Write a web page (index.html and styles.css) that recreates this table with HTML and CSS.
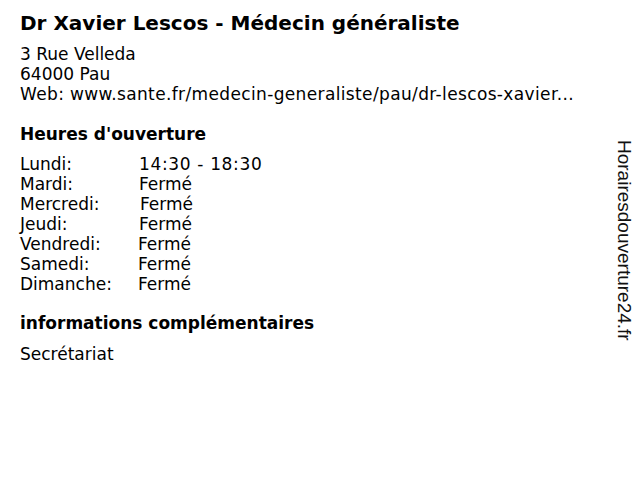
FILE: index.html
```html
<!DOCTYPE html>
<html lang="fr">
<head>
<meta charset="utf-8">
<link rel="stylesheet" href="styles.css">
</head>
<body>
<main class="page">
  <h1 class="title">Dr Xavier Lescos - Médecin généraliste</h1>
  <div class="address">
    <div>3 Rue Velleda</div>
    <div>64000 Pau</div>
    <div class="web">Web: www.sante.fr/medecin-generaliste/pau/dr-lescos-xavier...</div>
  </div>
  <h2 class="heading">Heures d'ouverture</h2>
  <div class="hours">
    <span>Lundi:</span><span class="v time">14:30 - 18:30</span>
    <span>Mardi:</span><span class="v">Fermé</span>
    <span>Mercredi:</span><span class="v v2">Fermé</span>
    <span>Jeudi:</span><span class="v">Fermé</span>
    <span>Vendredi:</span><span class="v v3">Fermé</span>
    <span>Samedi:</span><span class="v v3">Fermé</span>
    <span>Dimanche:</span><span class="v v3">Fermé</span>
  </div>
  <h2 class="heading heading-info">informations complémentaires</h2>
  <div class="info">Secrétariat</div>
</main>
<div class="side">Horairesdouverture24.fr</div>
</body>
</html>
```
FILE: styles.css
```css
html, body {
  margin: 0;
  padding: 0;
  background: #fff;
}
body {
  width: 640px;
  height: 480px;
  position: relative;
  overflow: hidden;
  font-family: "DejaVu Sans", Verdana, sans-serif;
  color: #000;
}
.page {
  padding: 10px 20px 0 20px;
}
.title {
  margin: 0;
  font-size: 20px;
  font-weight: bold;
  line-height: 26px;
}
.address {
  margin-top: 8px;
  font-size: 17px;
  line-height: 20px;
}
.web {
  letter-spacing: 0.36px;
}
.heading {
  margin: 18px 0 0 0;
  font-size: 17px;
  font-weight: bold;
  line-height: 24px;
}
.heading-info {
  margin-top: 17px;
}
.hours {
  margin-top: 8px;
  display: grid;
  grid-template-columns: 119px auto;
  justify-content: start;
  font-size: 17px;
  line-height: 20px;
}
.time { letter-spacing: 0.65px; }
.v2 { padding-left: 1px; }
.v3 { margin-left: -1px; }
.info {
  margin-top: 9px;
  font-size: 17px;
  line-height: 20px;
}
.side {
  position: absolute;
  top: 140px;
  left: 613px;
  writing-mode: vertical-rl;
  font-family: "Liberation Sans", Arial, sans-serif;
  font-size: 19px;
  line-height: 22px;
  color: #111;
}
```
